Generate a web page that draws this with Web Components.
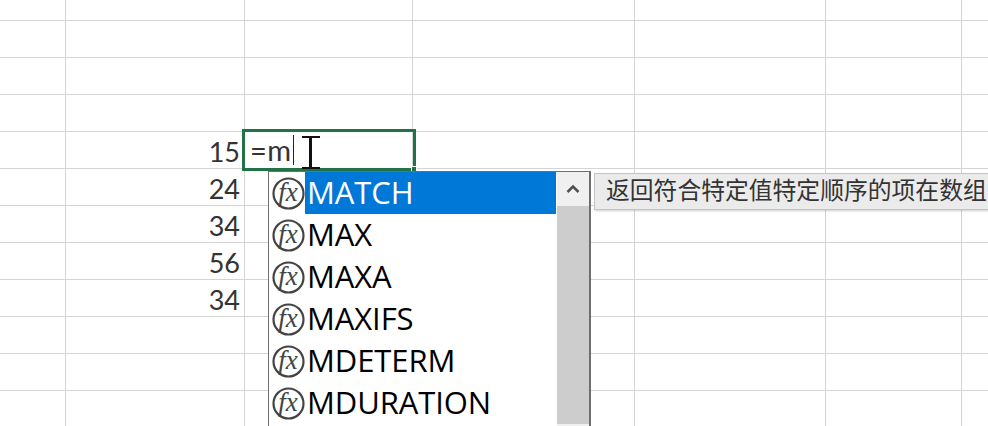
<!DOCTYPE html>
<html>
<head>
<meta charset="utf-8">
<style>
  html, body { margin: 0; height: 100%; overflow: hidden; background: #fff; }
</style>
</head>
<body>
<excel-sheet>
  <func-list>
    <func-item selected>MATCH</func-item>
    <func-item>MAX</func-item>
    <func-item>MAXA</func-item>
    <func-item>MAXIFS</func-item>
    <func-item>MDETERM</func-item>
    <func-item>MDURATION</func-item>
  </func-list>
  <func-tip>返回符合特定值特定顺序的项在数组</func-tip>
</excel-sheet>
<script>
class ExcelSheet extends HTMLElement {
    constructor() {
        super();
        this.attachShadow({mode: "open"});
        const values = {4: "15", 5: "24", 6: "34", 7: "56", 8: "34"};
        let cells = "";
        for (let r = 0; r < 12; r++) {
            for (let c = 0; c < 7; c++) {
                const text = c === 1 && values[r] ? values[r] : "";
                cells += `<div class="cell">${text}</div>`;
            }
        }
        this.shadowRoot.innerHTML = `
            <style>
                :host {
                    display: block;
                    position: relative;
                    width: 988px;
                    height: 426px;
                    overflow: hidden;
                    background: #fff;
                }
                .grid {
                    display: grid;
                    grid-template-columns: 66px 179px 168px 222px 191px 136px 60px;
                    grid-template-rows: 21px repeat(11, 37px);
                }
                .cell {
                    box-sizing: border-box;
                    border-right: 1px solid #d4d4d4;
                    border-bottom: 1px solid #d4d4d4;
                    font: 27px/39px Lato, "Liberation Sans", sans-serif;
                    color: #333;
                    text-align: right;
                    padding-right: 4px;
                }
                .active {
                    position: absolute;
                    left: 242px;
                    top: 129px;
                    width: 163px;
                    height: 36px;
                    border: 3px solid #217346;
                    font: 29px/38px Lato, "Liberation Sans", sans-serif;
                    letter-spacing: .5px;
                    color: #333;
                    padding-left: 5px;
                    display: flex;
                    align-items: center;
                }
                .caret {
                    width: 1px;
                    height: 30px;
                    background: #222;
                    margin-left: 1px;
                }
                .handle {
                    position: absolute;
                    right: -4px;
                    bottom: -4px;
                    width: 4px;
                    height: 4px;
                    background: #217346;
                    border: 1px solid #fff;
                }
                .beam {
                    position: absolute;
                    left: 300px;
                    top: 135px;
                }
            </style>
            <div class="grid">${cells}</div>
            <div class="active"><span>=m</span><span class="caret"></span><span class="handle"></span></div>
            <svg class="beam" width="22" height="36" viewBox="0 0 22 36">
                <path d="M2 2H20M2 33H20" stroke="#111" stroke-width="2" fill="none"/>
                <path d="M10.500 2V33" stroke="#111" stroke-width="3" fill="none"/>
            </svg>
            <slot></slot>
        `;
    }
}
customElements.define("excel-sheet", ExcelSheet);

class FuncList extends HTMLElement {
    constructor() {
        super();
        this.attachShadow({mode: "open"});
        this.shadowRoot.innerHTML = `
            <style>
                :host {
                    position: absolute;
                    left: 268px;
                    top: 171px;
                    width: 323px;
                    height: 260px;
                    display: flex;
                    box-sizing: border-box;
                    border: 1px solid #6e6e6e;
                    border-right-width: 2px;
                    background: #fff;
                }
                .items {
                    width: 287px;
                    flex: none;
                    display: flex;
                    flex-direction: column;
                }
                .bar {
                    width: 32px;
                    margin-left: 1px;
                    flex: none;
                    display: flex;
                    flex-direction: column;
                }
                .up {
                    height: 34px;
                    background: #f0f0f0;
                    display: flex;
                    align-items: center;
                    justify-content: center;
                }
                .thumb {
                    height: 218px;
                    background: #cdcdcd;
                }
                .rest {
                    flex: 1;
                    background: #f0f0f0;
                }
            </style>
            <div class="items"><slot></slot></div>
            <div class="bar">
                <div class="up">
                    <svg width="14" height="10" viewBox="0 0 14 10">
                        <path d="M1.500 8L7 2.500L12.500 8" stroke="#505050" stroke-width="2.500" fill="none"/>
                    </svg>
                </div>
                <div class="thumb"></div>
                <div class="rest"></div>
            </div>
        `;
    }
}
customElements.define("func-list", FuncList);

class FuncItem extends HTMLElement {
    constructor() {
        super();
        this.attachShadow({mode: "open"});
        this.shadowRoot.innerHTML = `
            <style>
                :host {
                    display: flex;
                    height: 42px;
                    align-items: center;
                    flex: none;
                }
                svg {
                    margin-left: 3px;
                    flex: none;
                }
                .name {
                    flex: 1;
                    height: 42px;
                    padding-left: 2px;
                    font: 31px/40px "Open Sans", "Liberation Sans", sans-serif;
                    letter-spacing: -.1px;
                    color: #000;
                }
                :host([selected]) .name {
                    background: #0078d7;
                    color: #fff;
                }
            </style>
            <svg width="33" height="33" viewBox="0 0 33 33">
                <circle cx="16.500" cy="16.500" r="15" fill="#fff" stroke="#444" stroke-width="2.200"/>
                <text x="16" y="24" text-anchor="middle" font-family="'Liberation Serif', serif" font-style="italic" font-size="27" fill="#444">fx</text>
            </svg>
            <div class="name"><slot></slot></div>
        `;
    }
}
customElements.define("func-item", FuncItem);

class FuncTip extends HTMLElement {
    constructor() {
        super();
        this.attachShadow({mode: "open"});
        this.shadowRoot.innerHTML = `
            <style>
                :host {
                    position: absolute;
                    left: 594px;
                    top: 173px;
                    width: 420px;
                    height: 37px;
                    box-sizing: border-box;
                    padding-left: 11px;
                    background: #ebebeb;
                    border: 1px solid #c4c4c4;
                    box-shadow: 1px 1px 2px rgba(0, 0, 0, .2);
                    font: 23.800px/30px "Noto Sans CJK SC", sans-serif;
                    color: #333;
                    white-space: nowrap;
                }
            </style>
            <slot></slot>
        `;
    }
}
customElements.define("func-tip", FuncTip);
</script>
</body>
</html>
